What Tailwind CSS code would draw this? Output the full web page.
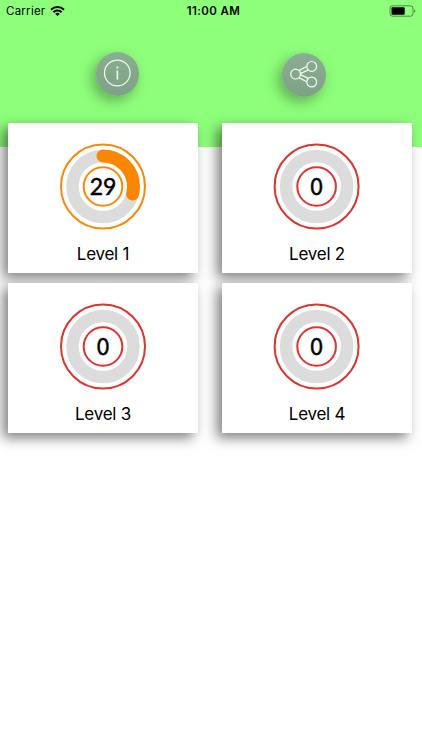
<!DOCTYPE html>
<html lang="en">
<head>
    <meta charset="UTF-8">
    <meta name="viewport" content="width=device-width, initial-scale=1.0">
    <title>Levels</title>
    <script src="https://cdn.jsdelivr.net/npm/@tailwindcss/browser@4"></script>
</head>
<body class="bg-white h-[750px] overflow-hidden text-black font-[Inter,sans-serif]">
    <header class="h-[147px] bg-[#8eff7b]">
        <!-- Status bar -->
        <div class="h-[22px] grid grid-cols-3 items-center px-[6px] text-[11.5px] leading-none">
            <div class="flex items-center gap-[5px]">
                <span class="tracking-[0.25px] pt-[2px]">Carrier</span>
                <svg class="w-[15px] h-[11px]" viewBox="0 0 15 11" fill="none" stroke="#000" stroke-width="2">
                    <path d="M1 3.7a9.2 9.2 0 0 1 13 0M3.4 6.2a5.8 5.8 0 0 1 8.2 0" />
                    <path d="M7.5 10.1 5.2 7.8a3.3 3.3 0 0 1 4.6 0z" fill="#000" stroke="none" />
                </svg>
            </div>
            <span class="text-center font-semibold tracking-[0.4px] pl-[5px] pt-[2px]">11:00 AM</span>
            <svg class="justify-self-end w-[27px] h-[12px] -mt-px" viewBox="0 0 27 12" fill="none">
                <rect x="1" y="0.8" width="23" height="10.4" rx="2.6" stroke="#000" stroke-opacity=".45" />
                <rect x="2.5" y="2.3" width="13.2" height="7.4" rx="1" fill="#000" />
                <path d="M25.2 4.2c1.6.5 1.6 3.1 0 3.6z" fill="#000" fill-opacity=".45" />
            </svg>
        </div>

        <div class="flex pt-[30px] pl-[96px] gap-[143px]">
            <button class="w-[43px] h-[44px] rounded-full bg-linear-to-b from-[#8bad92] to-[#7ea286] shadow-[-4px_5px_14px_rgba(0,0,0,0.32)]">
                <svg class="w-[43px] h-[44px]" viewBox="0 0 43 44" fill="none" stroke="#f0faef" stroke-width="1.2">
                    <circle cx="21.3" cy="21" r="12.8" />
                    <path d="M21.4 18.6v8.6" stroke-width="1.6" />
                    <path d="M20.3 18.9h1.1M20.5 27h1.9" stroke-width=".7" />
                    <circle cx="21.4" cy="15.6" r="1.1" fill="#f0faef" stroke="none" />
                </svg>
            </button>
            <button class="w-[44px] h-[44px] mt-[1px] rounded-full bg-linear-to-b from-[#8bad92] to-[#7ea286] shadow-[-4px_5px_14px_rgba(0,0,0,0.32)]">
                <svg class="w-[44px] h-[44px]" viewBox="0 0 44 44" fill="none" stroke="#f0faef" stroke-width="1.2">
                    <circle cx="13.6" cy="21.1" r="4.9" />
                    <circle cx="29.7" cy="13.4" r="4.9" />
                    <circle cx="29.7" cy="29" r="4.9" />
                    <path d="M17 17.6 25 13.2M18.5 20.6 26.4 16.9M18.5 21.6 26.2 25.4M17 24.6 25 29" />
                </svg>
            </button>
        </div>
    </header>

    <!-- Level cards overlap the header -->
    <main class="relative -mt-[24px] ml-[8px] grid grid-cols-[190px_190px] gap-x-[24px] gap-y-[10px]">
        <div class="h-[150px] bg-white flex flex-col items-center shadow-[-5px_5px_12px_rgba(0,0,0,0.5)]">
            <svg class="w-[90px] h-[90px] mt-[18px]" viewBox="0 0 90 90" fill="none">
                <circle cx="45" cy="45.5" r="42" stroke="#f7890c" stroke-width="2" />
                <circle cx="45" cy="45.5" r="30.5" stroke="#dcdcdc" stroke-width="12.5" />
                <circle cx="45" cy="45.5" r="30.5" stroke="#fa8704" stroke-width="13" stroke-linecap="round" pathLength="100" stroke-dasharray="29 71" transform="rotate(-90 45 45.5)" />
                <circle cx="45" cy="45.5" r="19.3" stroke="#f7890c" stroke-width="2" />
                <text x="45" y="53.5" text-anchor="middle" fill="#000" stroke="#000" stroke-width=".5" class="font-[Lato] text-[23px]">29</text>
            </svg>
            <span class="mt-[11px] text-[17px] leading-[24px] tracking-[-0.25px]">Level 1</span>
        </div>
        <div class="h-[150px] bg-white flex flex-col items-center shadow-[-5px_5px_12px_rgba(0,0,0,0.5)]">
            <svg class="w-[90px] h-[90px] mt-[18px]" viewBox="0 0 90 90" fill="none">
                <circle cx="44.6" cy="45.5" r="42" stroke="#dd342d" stroke-width="2" />
                <circle cx="44.6" cy="45.5" r="30.5" stroke="#dcdcdc" stroke-width="12.5" />
                <circle cx="44.6" cy="45.5" r="19.3" stroke="#dd342d" stroke-width="2" />
                <text x="44.6" y="53.5" text-anchor="middle" textLength="12" lengthAdjust="spacingAndGlyphs" fill="#000" stroke="#000" stroke-width=".6" class="font-[Lato] text-[23px]">0</text>
            </svg>
            <span class="mt-[11px] text-[17px] leading-[24px] tracking-[-0.25px]">Level 2</span>
        </div>
        <div class="h-[150px] bg-white flex flex-col items-center shadow-[-5px_5px_12px_rgba(0,0,0,0.5)]">
            <svg class="w-[90px] h-[90px] mt-[18px]" viewBox="0 0 90 90" fill="none">
                <circle cx="45" cy="45.5" r="42" stroke="#dd342d" stroke-width="2" />
                <circle cx="45" cy="45.5" r="30.5" stroke="#dcdcdc" stroke-width="12.5" />
                <circle cx="45" cy="45.5" r="19.3" stroke="#dd342d" stroke-width="2" />
                <text x="45" y="53.5" text-anchor="middle" textLength="12" lengthAdjust="spacingAndGlyphs" fill="#000" stroke="#000" stroke-width=".6" class="font-[Lato] text-[23px]">0</text>
            </svg>
            <span class="mt-[11px] text-[17px] leading-[24px] tracking-[-0.25px]">Level 3</span>
        </div>
        <div class="h-[150px] bg-white flex flex-col items-center shadow-[-5px_5px_12px_rgba(0,0,0,0.5)]">
            <svg class="w-[90px] h-[90px] mt-[18px]" viewBox="0 0 90 90" fill="none">
                <circle cx="44.6" cy="45.5" r="42" stroke="#dd342d" stroke-width="2" />
                <circle cx="44.6" cy="45.5" r="30.5" stroke="#dcdcdc" stroke-width="12.5" />
                <circle cx="44.6" cy="45.5" r="19.3" stroke="#dd342d" stroke-width="2" />
                <text x="44.6" y="53.5" text-anchor="middle" textLength="12" lengthAdjust="spacingAndGlyphs" fill="#000" stroke="#000" stroke-width=".6" class="font-[Lato] text-[23px]">0</text>
            </svg>
            <span class="mt-[11px] text-[17px] leading-[24px] tracking-[-0.25px]">Level 4</span>
        </div>
    </main>
</body>
</html>
